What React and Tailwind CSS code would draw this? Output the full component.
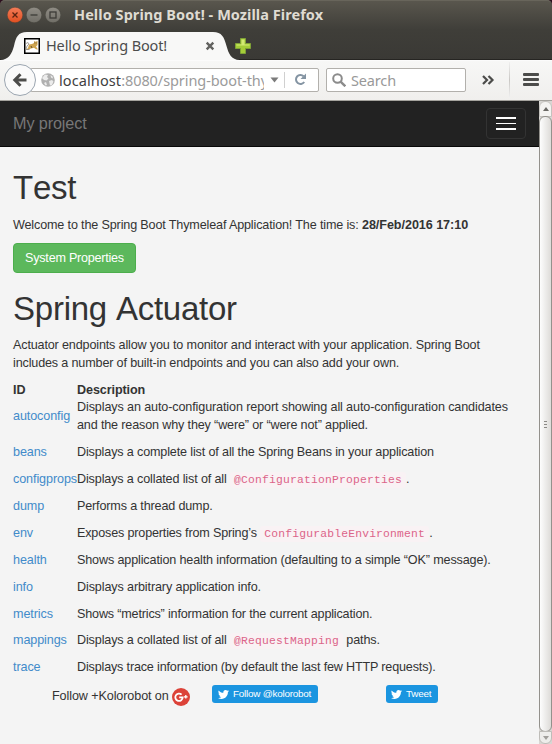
const ROWS = [
  { id: "beans", text: "Displays a complete list of all the Spring Beans in your application", track: "tracking-[-0.145px]" },
  { id: "configprops", text: "Displays a collated list of all ", code: "@ConfigurationProperties", tail: ".", track: "tracking-[-0.14px]" },
  { id: "dump", text: "Performs a thread dump.", track: "tracking-[-0.16px]" },
  { id: "env", text: "Exposes properties from Spring’s ", code: "ConfigurableEnvironment", tail: ".", track: "tracking-[-0.17px]" },
  { id: "health", text: "Shows application health information (defaulting to a simple “OK” message).", track: "tracking-[-0.14px]" },
  { id: "info", text: "Displays arbitrary application info.", track: "tracking-[-0.12px]" },
  { id: "metrics", text: "Shows “metrics” information for the current application.", track: "tracking-[-0.175px]", height: "h-[26px]" },
  { id: "mappings", text: "Displays a collated list of all ", code: "@RequestMapping", tail: " paths.", track: "tracking-[-0.14px]" },
  { id: "trace", text: "Displays trace information (by default the last few HTTP requests).", track: "tracking-[-0.17px]" },
];

const UI = "font-['Noto_Sans','Open_Sans',sans-serif]";

function Bird({ className }) {
  return (
    <svg viewBox="0 0 24 24" className={className} fill="#fff">
      <path d="M23.95 4.57a10 10 0 0 1-2.82.77 4.96 4.96 0 0 0 2.16-2.72c-.95.55-2 .95-3.13 1.18a4.92 4.92 0 0 0-8.38 4.48C7.69 8.1 4.07 6.13 1.64 3.16a4.92 4.92 0 0 0 1.52 6.57 4.9 4.9 0 0 1-2.23-.61v.06a4.92 4.92 0 0 0 3.95 4.83 5 5 0 0 1-2.21.08 4.94 4.94 0 0 0 4.6 3.42A9.87 9.87 0 0 1 0 19.54a13.99 13.99 0 0 0 7.55 2.21c9.05 0 14-7.5 14-13.98l-.02-.63a9.94 9.94 0 0 0 2.42-2.57z" />
    </svg>
  );
}

function WindowButton({ kind }) {
  const close = kind === "close";
  return (
    <svg width="16" height="16" viewBox="0 0 16 16">
      <defs>
        <linearGradient id={"wb-" + kind} x1="0" y1="0" x2="0" y2="1">
          <stop offset="0" stopColor={close ? "#f37c58" : "#908d85"} />
          <stop offset="1" stopColor={close ? "#e24f20" : "#706e67"} />
        </linearGradient>
      </defs>
      <circle cx="8" cy="8" r="7.8" fill={"url(#wb-" + kind + ")"} stroke="#3b3933" strokeWidth=".4" />
      {kind === "close" && <path d="M5.500 5.500l5 5m0-5l-5 5" stroke="#5b2411" strokeWidth="1.300" />}
      {kind === "min" && <path d="M4.500 8h7" stroke="#3c3b37" strokeWidth="1.300" />}
      {kind === "max" && <rect x="5" y="5" width="6" height="6" fill="none" stroke="#3c3b37" strokeWidth="1.300" />}
    </svg>
  );
}

function TitleBar() {
  return (
    <div className="flex h-[30px] items-center gap-[3px] rounded-t-[5px] border-t border-[#68655b] pb-[2px] pl-[7px]">
      <WindowButton kind="close" />
      <WindowButton kind="min" />
      <WindowButton kind="max" />
      <span className={`-mt-px ml-[10px] whitespace-nowrap text-[14.5px] font-bold leading-[18px] tracking-[0.06px] text-[#dfdbd2] ${UI}`}>
        Hello Spring Boot! - Mozilla Firefox
      </span>
    </div>
  );
}

function TabStrip() {
  return (
    <div className="relative flex h-[30px] items-center">
      <div className="absolute bottom-0 left-0 h-px w-full bg-[#262522]" />
      <svg className="absolute left-0 top-[2px]" width="240" height="28" viewBox="0 0 240 28">
        <path d="M0 28C9 28 12 21 14 14C16 5 18 0 27 0H213C222 0 224 5 226.500 14C228.500 21 231 28 240 28Z" fill="#f8f8f7" />
      </svg>
      <div className="relative flex items-center pl-[24px] pt-[2px]">
        <svg width="16" height="16" viewBox="0 0 16 16">
          <rect x=".75" y=".75" width="14.500" height="14.500" fill="#fff" stroke="#000" strokeWidth="1.500" />
          <path d="M5 6.500l3-.5 2-1V3l1.500.8L13.500 3v4l-1.500 1.500 2 3-2-.3-2-1.500-3 .8-3.500 1.500H2l2-2z" fill="#cfa550" />
          <path d="M2 5.500l2-1 1 1.500-2 2-1 3.500h3.500" stroke="#8e8a82" strokeWidth=".8" fill="none" />
          <path d="M10.500 5h.8M12.500 5h.5M7 8l1 2" stroke="#4b3b1e" strokeWidth=".8" fill="none" />
        </svg>
        <span className={`-mt-[2px] ml-[6px] w-[158px] whitespace-nowrap text-[14.5px] leading-[18px] tracking-[-0.12px] text-[#4c4c4c] ${UI}`}>Hello Spring Boot!</span>
        <svg width="12" height="12" viewBox="0 0 12 12">
          <path d="M2.700 2.700l6.600 6.600m0-6.600l-6.600 6.600" stroke="#62625f" strokeWidth="2.400" />
        </svg>
        <svg className="ml-[18px]" width="18" height="18" viewBox="0 0 18 18">
          <path d="M6.500 1.500h5v5h5v5h-5v5h-5v-5h-5v-5h5z" fill="#a5cd38" stroke="#7ea136" strokeLinejoin="round" />
          <path d="M7.500 7.500v-5h3v5h5v1h-13v-1z" fill="#d2ea73" />
        </svg>
      </div>
    </div>
  );
}

function Toolbar() {
  return (
    <div className="flex h-[41px] items-center border-b border-t border-b-[#a5a39e] border-t-[#fbfbfb] bg-linear-to-b from-[#f7f7f6] to-[#f0efed] pb-[2px]">
      <div className="z-10 ml-[4px] flex size-[32px] shrink-0 items-center justify-center rounded-full border border-[#9ba5b0] bg-[#fafafa]">
        <svg width="16" height="16" viewBox="0 0 16 16">
          <path d="M8.500 2.300L2.800 8l5.700 5.700M3 8h11.500" fill="none" stroke="#4c4c4a" strokeWidth="3" />
        </svg>
      </div>
      <div className="-ml-[6px] flex h-[24px] w-[289px] items-center rounded-[2px] border border-[#b2b0ac] bg-white">
        <svg className="ml-[10px] shrink-0" width="14" height="14" viewBox="0 0 14 14">
          <circle cx="7" cy="7" r="6.800" fill="#b0b0b0" />
          <path d="M1 5l3-3.500 3 .5-1 2 1.500 1.500-2 2L3 7zM8 8l3-1 1.500 1.500L11 12l-2 .5zM9.500 2l2 1.500.5 2-2-1zM3 10l2-1 1 3-1.500.5z" fill="#ececec" />
        </svg>
        <div className={`ml-[4px] w-[205px] shrink-0 overflow-hidden whitespace-nowrap text-[14.5px] leading-[20px] tracking-[-0.08px] text-[#9b9b9b] ${UI}`}>
          <span className="tracking-[0.1px] text-[#3f3f3f]">localhost</span>:8080/spring-boot-thymeleaf
        </div>
        <svg className="ml-[6px]" width="9" height="6" viewBox="0 0 9 6"><path d="M0.500 0.500h8L4.500 5.500z" fill="#7b7b7b" /></svg>
        <div className="ml-[5px] h-[16px] w-px bg-[#d0d0d0]" />
        <svg className="ml-[9px]" width="13" height="13" viewBox="0 0 13 13">
          <path d="M10.200 9A4.500 4.500 0 1 1 9.600 3.200" fill="none" stroke="#8494a3" strokeWidth="2" />
          <path d="M12 .5v5.500H6.500z" fill="#8494a3" />
        </svg>
      </div>
      <div className="ml-[7px] flex h-[24px] w-[140px] items-center rounded-[2px] border border-[#b2b0ac] bg-white pl-[5px]">
        <svg width="14" height="14" viewBox="0 0 14 14" fill="none" stroke="#8b8b8b">
          <circle cx="5.500" cy="5.500" r="4.300" strokeWidth="2" />
          <path d="M8.600 8.600l4.700 4.700" strokeWidth="2.400" />
        </svg>
        <span className={`ml-[5px] text-[14.5px] leading-[20px] tracking-[-0.15px] text-[#999] ${UI}`}>Search</span>
      </div>
      <svg className="ml-[16px]" width="13" height="10" viewBox="0 0 13 10">
        <path d="M1 1l4 4-4 4M6.500 1l4 4-4 4" fill="none" stroke="#4c4c4a" strokeWidth="2.200" />
      </svg>
      <div className="ml-[14px] h-[36px] w-px bg-linear-to-b from-[#f0f0f0] via-[#c9c7c4] to-[#f0f0f0]" />
      <div className="ml-[13px] flex flex-col gap-[2px]">
        <div className="h-[3px] w-[16px] rounded-[1px] bg-[#4c4c4a]" />
        <div className="h-[3px] w-[16px] rounded-[1px] bg-[#4c4c4a]" />
        <div className="h-[3px] w-[16px] rounded-[1px] bg-[#4c4c4a]" />
      </div>
    </div>
  );
}

function Scrollbar() {
  return (
    <div className="flex w-[13px] shrink-0 flex-col bg-[#d8d6d3]">
      <div className="flex h-[16px] items-center justify-center rounded-t-[6px] border border-[#c4c2be] bg-[#f4f3f1]">
        <svg width="6" height="4" viewBox="0 0 6 4"><path d="M0 4l3-4 3 4z" fill="#6b6965" /></svg>
      </div>
      <div className="-mt-px flex flex-1 flex-col items-center justify-center gap-[2px] rounded-[6px] border border-[#93918c] bg-linear-to-r from-[#fdfdfd] to-[#dddbd8]">
        <div className="h-px w-[3px] bg-[#8b8985]" />
        <div className="h-px w-[3px] bg-[#8b8985]" />
        <div className="h-px w-[3px] bg-[#8b8985]" />
      </div>
      <div className="-mt-px flex h-[13px] items-center justify-center rounded-b-[6px] border border-[#bebcb8] bg-[#eeedeb]">
        <svg width="6" height="4" viewBox="0 0 6 4"><path d="M0 0l3 4 3-4z" fill="#a19f9b" /></svg>
      </div>
    </div>
  );
}

function Row({ id, text, code, tail, track, height = "h-[27px]" }) {
  return (
    <div className={`flex whitespace-nowrap ${height}`}>
      <a className="w-[64px] shrink-0 tracking-[-0.1px] text-[#428bca]">{id}</a>
      <div className={`whitespace-pre ${track}`}>
        {text}
        {code && (
          <code className="rounded-[3px] bg-[#f9f2f4] px-[4px] py-[2px] font-['Liberation_Mono',monospace] text-[11.34px] tracking-[0.2px] text-[#dc6489]">{code}</code>
        )}
        {tail}
      </div>
    </div>
  );
}

function Page() {
  return (
    <main className="min-w-0 flex-1 bg-[#f4f4f4] font-['Liberation_Sans',Arial,sans-serif] text-[12.6px] leading-[18px] text-[#333]">
      <nav className="flex h-[46px] items-center justify-between border-b border-[#080808] bg-[#222] pl-[13px] pr-[13px]">
        <span className="-mt-px text-[16.2px] tracking-[-0.1px] text-[#777]">My project</span>
        <div className="flex h-[31px] w-[40px] flex-col items-center justify-center gap-[4px] rounded-[4px] border border-[#333]">
          <div className="h-[2px] w-[20px] bg-white" />
          <div className="h-px w-[20px] bg-white" />
          <div className="h-[2px] w-[20px] bg-white" />
        </div>
      </nav>
      <div className="pl-[13px] pt-[23px]">
        <h1 className="text-[33px] leading-[36px] tracking-[-0.24px] [font-kerning:none]">Test</h1>
        <p className="mt-[10px] whitespace-nowrap tracking-[-0.15px]">
          Welcome to the Spring Boot Thymeleaf Application! The time is: <b className="tracking-[-0.06px]">28/Feb/2016 17:10</b>
        </p>
        <div className="mt-[9px] flex h-[30px] w-[123px] items-center justify-center rounded-[4px] border border-[#4cae4c] bg-[#5cb85c] tracking-[-0.24px] text-white">
          System Properties
        </div>
        <h1 className="mt-[18px] text-[33px] leading-[36px] tracking-[-0.24px] [font-kerning:none]">Spring Actuator</h1>
        <p className="mt-[9px] whitespace-nowrap tracking-[-0.155px]">
          Actuator endpoints allow you to monitor and interact with your application. Spring Boot
          <br />
          includes a number of built-in endpoints and you can also add your own.
        </p>
        <div className="mt-[9px] flex h-[17px] font-bold tracking-[-0.1px]">
          <span className="w-[64px]">ID</span>
          <span>Description</span>
        </div>
        <div className="flex h-[45px] items-start">
          <a className="w-[64px] shrink-0 pt-[9px] tracking-[-0.1px] text-[#428bca]">autoconfig</a>
          <p className="whitespace-nowrap tracking-[-0.12px]">
            Displays an auto-configuration report showing all auto-configuration candidates
            <br />
            <span className="tracking-[-0.15px]">and the reason why they “were” or “were not” applied.</span>
          </p>
        </div>
        {ROWS.map((row) => (
          <Row key={row.id} {...row} />
        ))}
      </div>
      <footer className="mt-px flex pl-[52px]">
        <span className="w-[120px] whitespace-nowrap pt-px tracking-[-0.1px]">Follow +Kolorobot on</span>
        <svg className="mt-[2px]" width="18" height="18" viewBox="0 0 18 18">
          <circle cx="9" cy="9" r="9" fill="#dc4238" />
          <path d="M9.600 6.600A3.700 3.700 0 1 0 10.700 9.300H7.200" fill="none" stroke="#fff" strokeWidth="1.800" />
          <path d="M13.800 7v3.600M12 8.800h3.600" stroke="#fff" strokeWidth="1.300" />
        </svg>
        <div className="-mt-px ml-[22px] flex h-[18px] w-[106px] items-center whitespace-nowrap rounded-[3px] bg-[#1b95e0] pl-[6px] text-[9.9px] tracking-[-0.23px] text-white">
          <Bird className="mr-[4px] size-[11px]" />
          Follow @kolorobot
        </div>
        <div className="-mt-px ml-[68px] flex h-[18px] w-[52px] items-center rounded-[3px] bg-[#1b95e0] pl-[5px] text-[9.9px] tracking-[-0.2px] text-white">
          <Bird className="mr-[4px] size-[11px]" />
          Tweet
        </div>
      </footer>
    </main>
  );
}

export default function App() {
  return (
    <div className="flex h-[744px] w-[552px] flex-col overflow-hidden bg-[#2c0f1e]">
      <div className="shrink-0 rounded-t-[5px] bg-linear-to-b from-[#5a574e] via-[#3f3e39] to-[#3a3935]">
        <TitleBar />
        <TabStrip />
      </div>
      <Toolbar />
      <div className="flex flex-1">
        <Page />
        <Scrollbar />
      </div>
    </div>
  );
}
